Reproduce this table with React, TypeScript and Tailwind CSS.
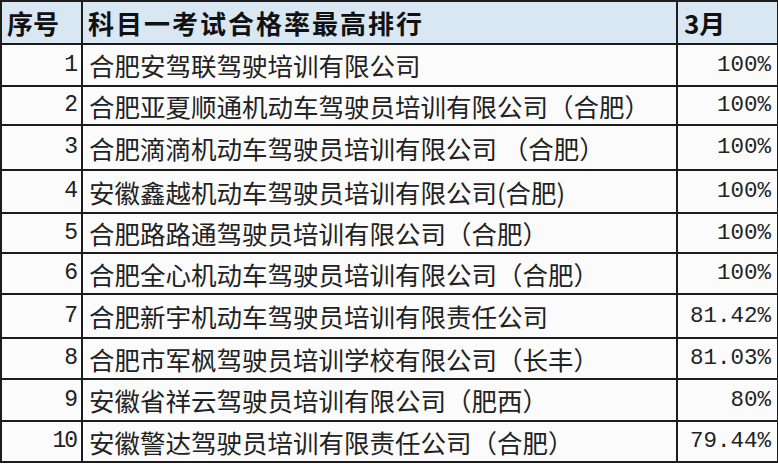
const rows = [
  { n: "1", name: "合肥安驾联驾驶培训有限公司", rate: "100%", h: 42 },
  { n: "2", name: "合肥亚夏顺通机动车驾驶员培训有限公司（合肥）", rate: "100%", h: 39 },
  { n: "3", name: "合肥滴滴机动车驾驶员培训有限公司 （合肥）", rate: "100%", h: 45 },
  { n: "4", name: "安徽鑫越机动车驾驶员培训有限公司(合肥)", rate: "100%", h: 43 },
  { n: "5", name: "合肥路路通驾驶员培训有限公司（合肥）", rate: "100%", h: 40 },
  { n: "6", name: "合肥全心机动车驾驶员培训有限公司（合肥）", rate: "100%", h: 41 },
  { n: "7", name: "合肥新宇机动车驾驶员培训有限责任公司", rate: "81.42%", h: 44 },
  { n: "8", name: "合肥市军枫驾驶员培训学校有限公司（长丰）", rate: "81.03%", h: 41 },
  { n: "9", name: "安徽省祥云驾驶员培训有限公司（肥西）", rate: "80%", h: 42 },
  { n: "10", name: "安徽警达驾驶员培训有限责任公司（合肥）", rate: "79.44%", h: 41 },
];

const cjk = "font-['Noto_Sans_CJK_SC',sans-serif]";
const mono = "font-['Liberation_Mono',monospace]";

export default function App() {
  return (
    <div className="h-[464px] w-[778px] overflow-hidden bg-white">
      <table className="w-[777px] table-fixed border-collapse bg-[#fbfbfb] text-[#222]">
        <colgroup>
          <col className="w-[81px]" />
          <col className="w-[595px]" />
          <col className="w-[101px]" />
        </colgroup>
        <thead>
          <tr className="h-[43px] bg-[#d8e7f2]">
            <th className={`border-2 border-[#1c1c1c] pl-[5px] text-left text-[26px] font-bold leading-none text-[#111] ${cjk}`}>
              序号
            </th>
            <th className={`border-2 border-[#1c1c1c] pl-[5px] text-left text-[26px] font-bold leading-none tracking-[2px] text-[#111] ${cjk}`}>
              科目一考试合格率最高排行
            </th>
            <th className={`border-2 border-[#1c1c1c] pl-[6px] text-left text-[26px] font-bold leading-none text-[#111] ${cjk}`}>
              3月
            </th>
          </tr>
        </thead>
        <tbody>
          {rows.map((r) => (
            <tr key={r.n} style={{ height: r.h }}>
              <td className={`border-2 border-[#1c1c1c] pr-[5px] text-right text-[23px] leading-none tracking-[-2px] ${mono}`}>
                {r.n}
              </td>
              <td className={`whitespace-pre border-2 border-[#1c1c1c] pl-[6px] text-[25.5px] leading-none ${cjk}`}>
                {r.name}
              </td>
              <td className={`border-2 border-[#1c1c1c] pr-[6px] text-right text-[22.5px] leading-none ${mono}`}>
                {r.rate}
              </td>
            </tr>
          ))}
        </tbody>
      </table>
    </div>
  );
}
